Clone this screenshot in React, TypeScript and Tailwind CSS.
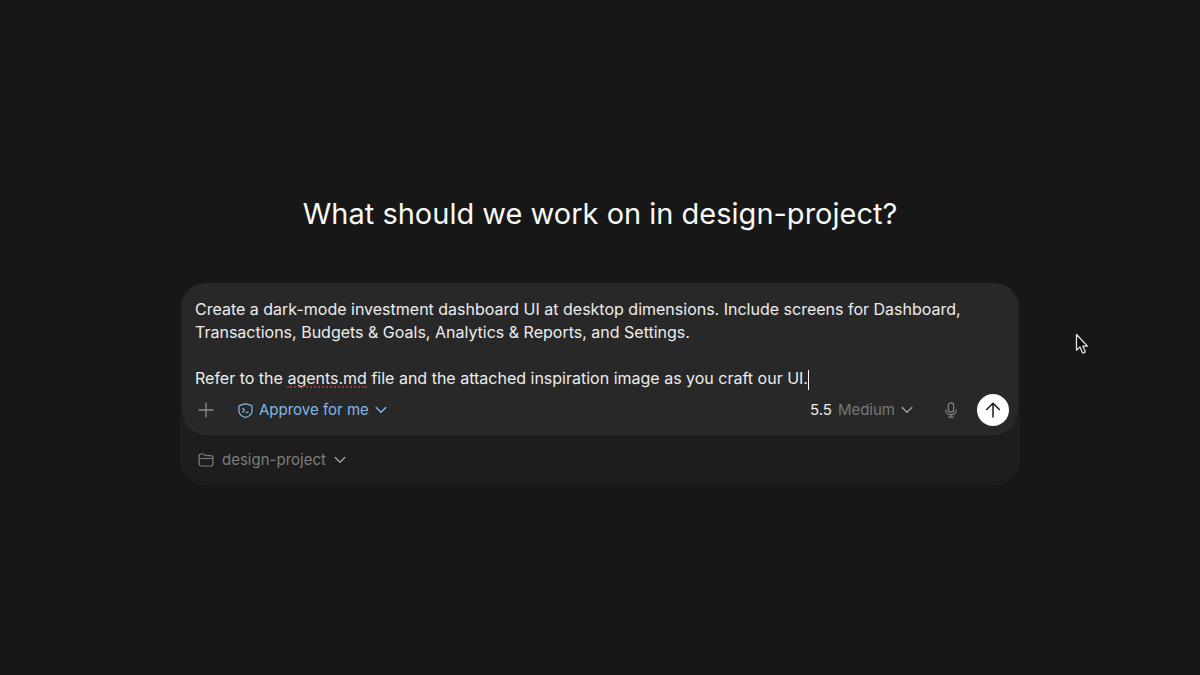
import React, { useState } from 'react';

interface IconProps {
  className?: string;
}

const INITIAL_PROMPT = `Create a dark-mode investment dashboard UI at desktop dimensions. Include screens for Dashboard, Transactions, Budgets & Goals, Analytics & Reports, and Settings.

Refer to the agents.md file and the attached inspiration image as you craft our UI.`;

const MISSPELLED = 'agents.md';

const ChevronIcon = ({ className }: IconProps) => (
  <svg viewBox="0 0 12 12" className={`h-3 w-3 ${className ?? ''}`} fill="none" stroke="currentColor" strokeWidth="1.4" strokeLinecap="round" strokeLinejoin="round">
    <path d="M1.2 3.6 6 8.2l4.8-4.6" />
  </svg>
);

const PlusIcon = () => (
  <svg viewBox="0 0 16 16" className="h-4 w-4" fill="none" stroke="currentColor" strokeWidth="1.3" strokeLinecap="round">
    <path d="M8 1v14M1 8h14" />
  </svg>
);

// Shield with a terminal prompt inside
const ShieldIcon = () => (
  <svg viewBox="0 0 16 16" className="h-[15px] w-[15px]" fill="none" stroke="currentColor" strokeWidth="1.3" strokeLinecap="round" strokeLinejoin="round">
    <path d="M7.2 1 2.1 2.5c-.7.2-1.100.7-1.100 1.400v4.300c0 3.300 2.500 5.700 6.200 7 .5.200 1.100.2 1.600 0 3.700-1.300 6.200-3.700 6.200-7V3.900c0-.7-.4-1.200-1.100-1.400L8.800 1c-.5-.2-1.100-.2-1.600 0Z" />
    <path d="M5 5.700 6.800 7.700 5 9.700M8.700 9.900h2.100" />
  </svg>
);

const FolderIcon = () => (
  <svg viewBox="0 0 16 16" className="h-4 w-4" fill="none" stroke="currentColor" strokeWidth="1.2" strokeLinecap="round" strokeLinejoin="round">
    <path d="M1.200 11.900V3.900c0-1.200.7-1.900 1.900-1.900h1.800c.6 0 1 .2 1.400.5l.8.7c.3.300.6.400 1 .400h4.700c1.300 0 2.100.8 2.100 2v6.300c0 1.300-.8 2.100-2.100 2.100H3.300c-1.300 0-2.100-.8-2.100-2.100Z" />
    <path d="M1.200 6.500h13.700" />
  </svg>
);

const MicIcon = () => (
  <svg viewBox="0 0 16 16" className="h-4 w-4" fill="none" stroke="currentColor" strokeWidth="1.2" strokeLinecap="round" strokeLinejoin="round">
    <rect x="5.300" y=".8" width="5.400" height="9.400" rx="2.700" />
    <path d="M2.700 8c.3 2.800 2.400 4.700 5.300 4.700s5-1.900 5.300-4.700M8 12.700v2.500M5.600 15.200h4.800" />
  </svg>
);

const ArrowUpIcon = () => (
  <svg viewBox="0 0 16 16" className="h-4 w-4" fill="none" stroke="currentColor" strokeWidth="1.5" strokeLinecap="round" strokeLinejoin="round">
    <path d="M8 15V1.200M1.700 7.500 8 1.200l6.300 6.300" />
  </svg>
);

const PointerIcon = ({ className }: IconProps) => (
  <svg viewBox="0 0 14 22" className={className} fill="#0a0a0a" stroke="#e4e4e4" strokeWidth="1.300" strokeLinejoin="round">
    <path d="M1.500 1.500v15.700l3.500-3.300 2.400 5.500c.2.500.7.600 1.200.4l1.100-.5c.5-.2.600-.6.400-1.100l-2.300-5.100h4.600Z" />
  </svg>
);

function PromptBox() {
  const [prompt, setPrompt] = useState(INITIAL_PROMPT);
  const at = prompt.indexOf(MISSPELLED);

  return (
    <div className="relative text-base leading-[23px]">
      <textarea
        aria-label="Prompt"
        rows={4}
        spellCheck={false}
        value={prompt}
        onChange={(e) => setPrompt(e.target.value)}
        className="block w-full resize-none overflow-hidden text-[#ededed] outline-none"
      />
      {/* Spelling mark and caret: the hidden copy only gives them their place */}
      <div aria-hidden="true" className="pointer-events-none invisible absolute inset-0 whitespace-pre-wrap break-words">
        {at < 0 ? prompt : (
          <>
            {prompt.slice(0, at)}
            <span className="relative">
              {MISSPELLED}
              <span className="visible absolute inset-x-0 bottom-0 border-b-2 border-dotted border-[#8f3535]" />
            </span>
            {prompt.slice(at + MISSPELLED.length)}
          </>
        )}
        <span className="visible inline-block h-5 w-px bg-white align-middle" />
      </div>
    </div>
  );
}

export default function App() {
  return (
    <main className="relative flex min-h-screen flex-col items-center justify-center bg-[#171717] px-6 font-['Inter',sans-serif] text-[#ededed]">
      <h1 className="mb-[45px] text-center text-[29px] leading-[48px] text-[#f8f8f8]">What should we work on in design-project?</h1>

      <div className="w-full max-w-[840px] rounded-3xl bg-[#1d1d1d]">
        <form
          onSubmit={(e) => e.preventDefault()}
          className="mx-0.5 rounded-3xl bg-[#282828] px-[13px] pt-[15px] pb-[9px]"
        >
          <PromptBox />

          {/* Toolbar */}
          <div className="mt-1 flex items-center justify-between text-[15px] leading-5">
            <div className="flex items-center gap-6 pl-[3px]">
              <button type="button" aria-label="Add" className="text-[#8b8b8b]"><PlusIcon /></button>
              <button type="button" className="flex items-center gap-1.5 text-[#83b8e6]">
                <ShieldIcon />
                Approve for me
                <ChevronIcon />
              </button>
            </div>
            <div className="-mr-1 flex items-center">
              <button type="button" className="flex items-center gap-1.5 text-[#777777]">
                <span className="text-[#ededed]">5.5</span>
                Medium
                <ChevronIcon className="text-[#a0a0a0]" />
              </button>
              <button type="button" aria-label="Dictate" className="ml-[30px] text-[#858585]"><MicIcon /></button>
              <button type="submit" aria-label="Send" className="ml-[18px] flex h-8 w-8 items-center justify-center rounded-full bg-white text-[#1c1c1c]">
                <ArrowUpIcon />
              </button>
            </div>
          </div>
        </form>

        <div className="flex h-[50px] items-center px-[18px]">
          <button type="button" className="flex items-center gap-2 text-[15px] leading-5 text-[#7c7c7c]">
            <FolderIcon />
            design-project
            <ChevronIcon className="text-[#a0a0a0]" />
          </button>
        </div>
      </div>

      <PointerIcon className="pointer-events-none absolute top-[333px] left-[1075px] h-[22px] w-3.5" />
    </main>
  );
}
